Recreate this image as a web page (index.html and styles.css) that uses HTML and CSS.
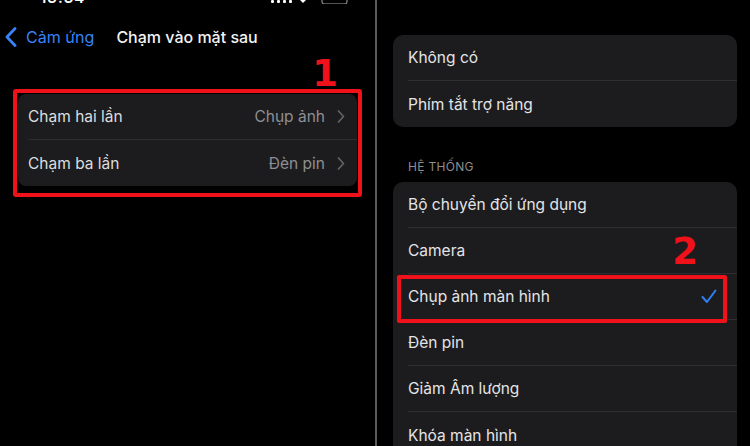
FILE: index.html
```html
<!DOCTYPE html>
<html lang="vi">
  <head>
    <meta charset="UTF-8" />
    <meta name="viewport" content="width=device-width, initial-scale=1.0" />
    <title>Chạm vào mặt sau</title>
    <link rel="stylesheet" href="styles.css">
  </head>
  <body>
    <div class="screen">
      <section class="pane pane-left">
        <div class="status">
          <span class="status-time">13:34</span>
          <svg class="status-icons" width="80" height="5" viewBox="0 0 80 5">
            <rect x="3" y="0" width="3" height="3" rx="1" fill="#fff" />
            <rect x="9" y="0" width="3" height="3" rx="1" fill="#fff" />
            <rect x="15" y="0" width="3" height="3" rx="1" fill="#fff" />
            <rect x="21" y="0" width="3" height="3" rx="1" fill="#fff" />
            <path d="M32 0 L35 3 L38 0" fill="#fff" />
            <path d="M54 0 V2 Q54 4 56 4 H77 Q79 4 79 2 V0" fill="none" stroke="#aaa" stroke-width="1" />
          </svg>
        </div>

        <header class="nav">
          <span class="nav-back">
            <svg width="12" height="20" viewBox="0 0 12 20">
              <path d="M10 1.5 L2 10 L10 18.5" fill="none" stroke="#3a82f7" stroke-width="2.8" stroke-linecap="round" stroke-linejoin="round" />
            </svg>
            Cảm ứng
          </span>
          <h1 class="nav-title">Chạm vào mặt sau</h1>
        </header>

        <div class="mark-group">
          <span class="mark-num">1</span>
          <ul class="card card-left">
            <li class="row">
              <div class="row-inner">
                <span class="row-label">Chạm hai lần</span>
                <span class="row-value">Chụp ảnh</span>
                <svg class="chevron" width="8" height="13" viewBox="0 0 8 13">
                  <path d="M1.5 1 L6.5 6.5 L1.5 12" fill="none" stroke="#616165" stroke-width="1.7" stroke-linecap="round" stroke-linejoin="round" />
                </svg>
              </div>
            </li>
            <li class="row">
              <div class="row-inner">
                <span class="row-label">Chạm ba lần</span>
                <span class="row-value">Đèn pin</span>
                <svg class="chevron" width="8" height="13" viewBox="0 0 8 13">
                  <path d="M1.5 1 L6.5 6.5 L1.5 12" fill="none" stroke="#616165" stroke-width="1.7" stroke-linecap="round" stroke-linejoin="round" />
                </svg>
              </div>
            </li>
          </ul>
        </div>
      </section>

      <section class="pane pane-right">
        <ul class="card">
          <li class="row"><div class="row-inner"><span class="row-label">Không có</span></div></li>
          <li class="row"><div class="row-inner"><span class="row-label">Phím tắt trợ năng</span></div></li>
        </ul>

        <h2 class="section-title">HỆ THỐNG</h2>

        <ul class="card">
          <li class="row"><div class="row-inner"><span class="row-label">Bộ chuyển đổi ứng dụng</span></div></li>
          <li class="row"><div class="row-inner"><span class="row-label">Camera</span></div></li>
          <li class="row row-marked">
            <div class="row-inner">
              <span class="row-label">Chụp ảnh màn hình</span>
              <svg class="check" width="16" height="15" viewBox="0 0 16 15">
                <path d="M1.5 8 L6 13 L14.5 1.5" fill="none" stroke="#2f80f2" stroke-width="2" stroke-linecap="round" stroke-linejoin="round" />
              </svg>
            </div>
            <div class="mark-row"><span class="mark-num">2</span></div>
          </li>
          <li class="row"><div class="row-inner"><span class="row-label">Đèn pin</span></div></li>
          <li class="row"><div class="row-inner"><span class="row-label">Giảm Âm lượng</span></div></li>
          <li class="row"><div class="row-inner"><span class="row-label">Khóa màn hình</span></div></li>
        </ul>
      </section>
    </div>
  </body>
</html>
```

FILE: styles.css
```css
* {
  box-sizing: border-box;
  margin: 0px;
  padding: 0px;
}
html,
body {
  height: 100%;
  background: #000;
  overflow: hidden;
}
body {
  font-family: Inter, "Noto Sans", sans-serif;
  color: #e4e4e6;
}
.screen {
  display: flex;
  height: 446px;
}
.pane-left {
  width: 375px;
  flex-shrink: 0;
}
.pane-right {
  flex: 1;
  border-left: 2px solid #5a5a5a;
  padding: 35px 13px 0 16px;
}

/* status bar, only the bottom edge is visible */
.status {
  height: 4px;
  overflow: hidden;
  display: flex;
  padding-left: 40px;
}
.status-time {
  display: block;
  margin-top: -9px;
  line-height: 14px;
  font-size: 15px;
  font-weight: 600;
  color: #fff;
  letter-spacing: 1px;
}
.status-icons {
  margin-left: auto;
  margin-right: 27px;
}

.nav {
  height: 44px;
  margin-top: 11px;
  display: flex;
  align-items: center;
  padding-left: 5px;
}
.nav-back {
  display: flex;
  align-items: center;
  gap: 9px;
  color: #3a82f7;
  font-size: 16px;
}
.nav-title {
  margin-left: 22px;
  font-size: 16px;
  font-weight: 500;
  color: #f2f2f2;
}

.card {
  list-style: none;
  background: #1c1c1e;
  border-radius: 10px;
  overflow: hidden;
}
.row {
  padding-left: 15px;
}
.row-inner {
  height: 46px;
  display: flex;
  align-items: center;
  border-bottom: 1px solid #2e2e31;
  padding-right: 20px;
  font-size: 15.5px;
}
.row:last-child .row-inner {
  border-bottom: none;
}
.row-label {
  flex: 1;
}
.row-value {
  color: #8e8e93;
}
.chevron {
  margin-left: 12px;
}

.card-left {
  border-radius: 8px;
}
.card-left .row {
  padding-left: 10px;
}
.card-left .row-inner {
  padding-right: 12px;
  color: #dcdcde;
}

.section-title {
  margin: 32px 0 7px;
  padding-left: 15px;
  font-size: 12px;
  line-height: 16px;
  font-weight: 400;
  letter-spacing: 0.3px;
  color: #8d8d92;
}

/* red annotation marks */
.mark-group {
  position: relative;
  margin: 30px 13px 0;
  border: 4px solid #f0111a;
  border-radius: 3px;
  padding: 1px 1px 7px;
}
.mark-num {
  position: absolute;
  font-family: "DejaVu Sans", sans-serif;
  font-weight: 700;
  font-size: 37px;
  line-height: 37px;
  color: #f0111a;
}
.mark-group .mark-num {
  top: -38px;
  right: 20px;
}
.row-marked {
  position: relative;
}
.mark-row {
  position: absolute;
  left: 4px;
  right: 10px;
  top: 1px;
  height: 48px;
  border: 4px solid #f0111a;
  border-radius: 2px;
}
.mark-row .mark-num {
  top: -46px;
  right: 25px;
}
```
